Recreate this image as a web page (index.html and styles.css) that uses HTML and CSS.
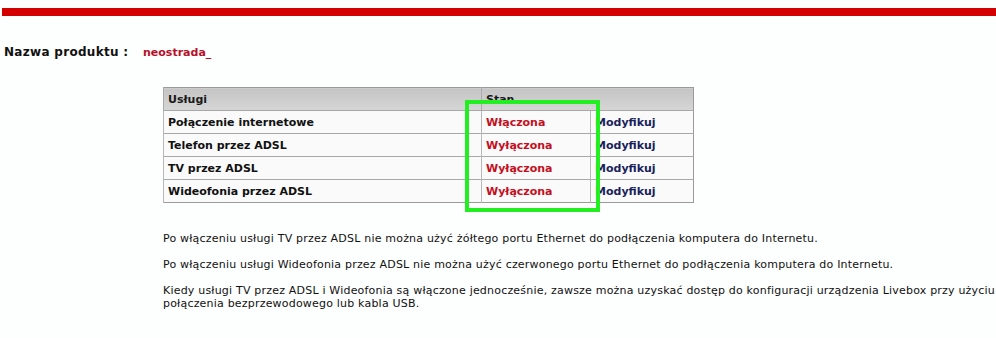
FILE: index.html
```html
<!DOCTYPE html>
<html lang="pl">
<head>
<meta charset="utf-8">
<link rel="stylesheet" href="styles.css">
</head>
<body>
<div class="topbar"></div>
<div class="product">
  <span class="product-label">Nazwa produktu :</span>
  <span class="product-value">neostrada_</span>
</div>
<div class="content">
  <div class="table-wrap">
    <table class="services">
      <thead>
        <tr>
          <th class="col-name">Usługi</th>
          <th colspan="2" class="col-state">Stan</th>
        </tr>
      </thead>
      <tbody>
        <tr>
          <td class="col-name">Połączenie internetowe</td>
          <td class="state">Włączona</td>
          <td class="action">Modyfikuj</td>
        </tr>
        <tr>
          <td class="col-name">Telefon przez ADSL</td>
          <td class="state">Wyłączona</td>
          <td class="action">Modyfikuj</td>
        </tr>
        <tr>
          <td class="col-name">TV przez ADSL</td>
          <td class="state">Wyłączona</td>
          <td class="action">Modyfikuj</td>
        </tr>
        <tr>
          <td class="col-name">Wideofonia przez ADSL</td>
          <td class="state">Wyłączona</td>
          <td class="action">Modyfikuj</td>
        </tr>
      </tbody>
    </table>
    <div class="highlight"></div>
  </div>
  <p class="note">Po włączeniu usługi TV przez ADSL nie można użyć żółtego portu Ethernet do podłączenia komputera do Internetu.</p>
  <p class="note">Po włączeniu usługi Wideofonia przez ADSL nie można użyć czerwonego portu Ethernet do podłączenia komputera do Internetu.</p>
  <p class="note">Kiedy usługi TV przez ADSL i Wideofonia są włączone jednocześnie, zawsze można uzyskać dostęp do konfiguracji urządzenia Livebox przy użyciu<br>połączenia bezprzewodowego lub kabla USB.</p>
</div>
</body>
</html>
```

FILE: styles.css
```css
html, body {
  margin: 0;
  padding: 0;
  background: #fdfefe;
  overflow: hidden;
}
body {
  font-family: "DejaVu Sans", Verdana, sans-serif;
  font-size: 11px;
  color: #111;
  width: 996px;
  height: 338px;
}
.topbar {
  margin: 8px 0 0 2px;
  height: 8px;
  background: #d40000;
}
.product {
  margin: 29px 0 0 4px;
  display: flex;
  align-items: baseline;
}
.product-label {
  font-weight: bold;
  font-size: 12px;
  letter-spacing: 0.3px;
  color: #111;
  width: 139px;
}
.product-value {
  font-weight: bold;
  font-size: 11px;
  color: #b8102a;
}
.content {
  margin: 28px 0 0 163px;
}
.table-wrap {
  position: relative;
  width: 531px;
}
.services {
  border-collapse: collapse;
  width: 531px;
  border: 1px solid #9a9a9a;
}
.services th {
  background: linear-gradient(#c4c4c4, #d6d6d6);
  text-align: left;
  font-weight: bold;
  height: 22px;
  padding: 0 4px;
  border-left: 1px solid #aaa;
  vertical-align: middle;
  color: #1a1a1a;
}
.services td {
  background: #fafafa;
  height: 22px;
  padding: 0 4px;
  font-weight: bold;
  border-top: 1px solid #a8a8a8;
  border-left: 1px solid #b8b8b8;
}
.services .col-name { width: 309px; }
.services td.state { width: 100px; color: #c4101e; }
.services td.action { color: #1a1f5c; }
.highlight {
  position: absolute;
  left: 302px;
  top: 13px;
  width: 127px;
  height: 104px;
  border: 4px solid #22ee22;
}
.note {
  margin: 29px 0 0 0;
  line-height: 13px;
  letter-spacing: 0.2px;
  white-space: nowrap;
}
.note + .note {
  margin-top: 13px;
}
```
